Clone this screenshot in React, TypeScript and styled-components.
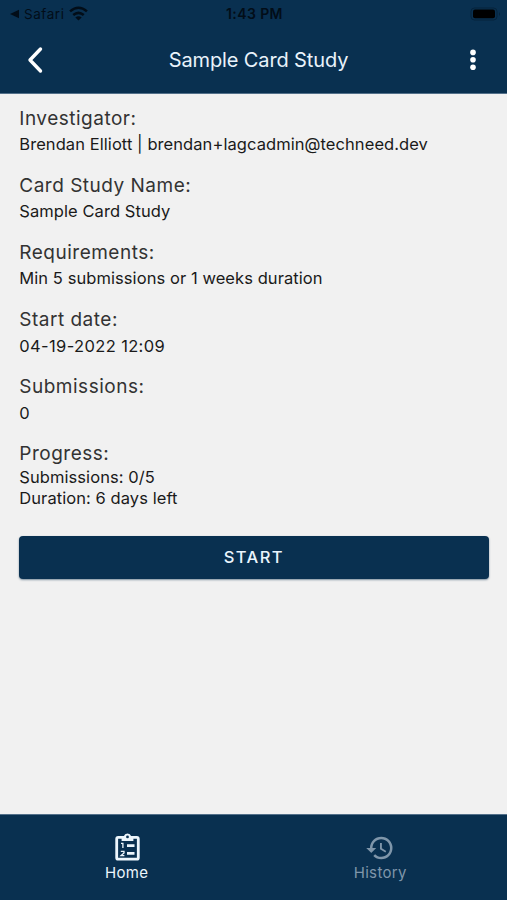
import React from "react";
import styled, { createGlobalStyle } from "styled-components";

const NAVY = "#093050";

const GlobalStyle = createGlobalStyle`
  * { box-sizing: border-box; }
  body { margin: 0; background: #f1f1f1; font-family: Inter, "Liberation Sans", sans-serif; }
`;

const Screen = styled.div`
  width: 507px;
  height: 900px;
  display: flex;
  flex-direction: column;
  overflow: hidden;
  background: #f1f1f1;
`;

const Header = styled.header`
  height: 94px;
  background: ${NAVY};
  border-bottom: 1px solid #53708a;
`;

const StatusBar = styled.div`
  height: 27px;
  display: grid;
  grid-template-columns: 1fr auto 1fr;
  align-items: center;
  padding: 0 6px 0 8px;
  color: #020d18;
  font-size: 13.5px;
`;

const BackToApp = styled.div`
  display: flex;
  align-items: center;
  letter-spacing: 0.55px;
  svg:first-child { margin-right: 5px; }
  svg:last-child { margin-left: 5px; }
`;

const Clock = styled.div`
  font-weight: 600;
  font-size: 14px;
  letter-spacing: 0.4px;
`;

const Battery = styled.svg`
  justify-self: end;
`;

const TitleBar = styled.div`
  height: 66px;
  display: grid;
  grid-template-columns: 60px 1fr 50px;
  align-items: center;
`;

const IconButton = styled.button`
  display: flex;
  justify-content: center;
  padding: 0 0 0 10px;
  border: 0;
  background: none;
`;

const MenuButton = styled(IconButton)`
  padding: 0;
  margin-right: 19px;
`;

const Title = styled.h1`
  margin: 0 0 1px;
  text-align: center;
  font-size: 20px;
  font-weight: 400;
  letter-spacing: -0.12px;
  color: #e9f3fb;
`;

const Content = styled.main`
  flex: 1;
  padding: 11.5px 18.5px 0 19.3px;
`;

const Field = styled.section`
  height: 67.2px;
`;

const Label = styled.h2`
  margin: 0;
  font-size: 19px;
  line-height: 26px;
  font-weight: 400;
  letter-spacing: 0.5px;
  color: #333;
`;

const Value = styled.p<{ $tight?: boolean; $spacing?: number }>`
  margin: 0;
  padding-top: ${(p) => (p.$tight ? 0 : 2.6)}px;
  font-size: 16.5px;
  line-height: ${(p) => (p.$tight ? 20.8 : 21)}px;
  letter-spacing: ${(p) => p.$spacing ?? 0.07}px;
  color: #1a1a1a;
`;

const Progress = styled.section`
  height: 94.5px;
`;

const StartButton = styled.button`
  display: block;
  width: 100%;
  height: 43px;
  padding: 0;
  border: 0;
  border-radius: 4px;
  background: ${NAVY};
  color: #eaf5fd;
  font: 500 16.5px Inter, sans-serif;
  letter-spacing: 1.4px;
  box-shadow: 0 1px 2px rgba(10, 48, 78, 0.5);
`;

const TabBar = styled.nav`
  height: 86px;
  display: grid;
  grid-template-columns: 1fr 1fr;
  background: ${NAVY};
  border-top: 1px solid #53708a;
`;

const Tab = styled.div<{ $active?: boolean }>`
  display: flex;
  flex-direction: column;
  align-items: center;
  padding-top: 18px;
  font-size: 15px;
  line-height: 18px;
  letter-spacing: 0.35px;
  color: ${(p) => (p.$active ? "#edf6fc" : "#7f96aa")};
  svg { margin-bottom: 1px; }
`;

const fields: { label: string; value: string; spacing?: number }[] = [
  { label: "Investigator:", value: "Brendan Elliott | brendan+lagcadmin@techneed.dev" },
  { label: "Card Study Name:", value: "Sample Card Study" },
  { label: "Requirements:", value: "Min 5 submissions or 1 weeks duration" },
  { label: "Start date:", value: "04-19-2022 12:09", spacing: 0.36 },
  { label: "Submissions:", value: "0" },
];

const ClipboardIcon = () => (
  <svg width="30" height="30" viewBox="0 0 30 30" fill="none" stroke="currentColor">
    <rect x="4.7" y="4.4" width="21.6" height="21.8" rx="1.5" strokeWidth="2.8" />
    <path d="M9.6 3.2 H11.8 A3.9 3.9 0 0 1 19.2 3.2 H21.4 V8 H9.6 Z" fill="currentColor" stroke="none" />
    <circle cx="15.5" cy="3.9" r="1.4" fill={NAVY} stroke="none" />
    <path d="M9 10.4 H10.9 V15 M8.8 18.3 H12 V19.9 L9 22.6 H12.4" strokeWidth="1.3" />
    <path d="M15 12.6 H22.5 M15 20.4 H22.5" strokeWidth="2.6" />
  </svg>
);

const HistoryIcon = () => (
  <svg width="30" height="30" viewBox="0 0 24 24" fill="currentColor">
    <path d="M13 3a9 9 0 0 0-9 9H1l3.89 3.89.07.14L9 12H6c0-3.87 3.13-7 7-7s7 3.13 7 7-3.13 7-7 7c-1.93 0-3.68-.79-4.94-2.06l-1.42 1.42A8.954 8.954 0 0 0 13 21a9 9 0 0 0 0-18zm-1 5v5l4.28 2.54.72-1.21-3.5-2.08V8H12z" />
  </svg>
);

export default function App() {
  return (
    <Screen>
      <GlobalStyle />
      <Header>
        <StatusBar>
          <BackToApp>
            <svg width="11" height="10" viewBox="0 0 11 10" fill="currentColor"><path d="M2 5 11 0.8V9.2Z" /></svg>
            Safari
            <svg width="19" height="15" viewBox="0 0 18 14" fill="none" stroke="currentColor" strokeWidth="2.4">
              <path d="M1 5Q9-2 17 5M4 8.5Q9 4.2 14 8.5" />
              <path d="M6 10.7Q9 8.3 12 10.7L9 13.7Z" fill="currentColor" stroke="none" />
            </svg>
          </BackToApp>
          <Clock>1:43 PM</Clock>
          <Battery width="31" height="14" viewBox="0 0 31 14">
            <rect x="1" y="1" width="26" height="12" rx="3.5" fill="none" stroke="#06233b" />
            <rect x="3" y="2.6" width="22" height="8.6" rx="2" fill="#000" />
            <path d="M29 5Q31 7 29 9Z" fill="#06233b" />
          </Battery>
        </StatusBar>
        <TitleBar>
          <IconButton aria-label="Back">
            <svg width="18" height="28" viewBox="0 0 18 28" fill="none" stroke="#fff" strokeWidth="3.4" strokeLinecap="round" strokeLinejoin="round">
              <path d="M14.5 3 4 14 14.5 25" />
            </svg>
          </IconButton>
          <Title>Sample Card Study</Title>
          <MenuButton aria-label="More">
            <svg width="6" height="22" viewBox="0 0 6 22" fill="#fff">
              <circle cx="3" cy="3.4" r="2.8" />
              <circle cx="3" cy="10.8" r="2.8" />
              <circle cx="3" cy="18.2" r="2.8" />
            </svg>
          </MenuButton>
        </TitleBar>
      </Header>
      <Content>
        {fields.map(({ label, value, spacing }) => (
          <Field key={label}>
            <Label>{label}</Label>
            <Value $spacing={spacing}>{value}</Value>
          </Field>
        ))}
        <Progress>
          <Label>Progress:</Label>
          <Value $tight>Submissions: 0/5</Value>
          <Value $tight>Duration: 6 days left</Value>
        </Progress>
        <StartButton>START</StartButton>
      </Content>
      <TabBar>
        <Tab $active>
          <ClipboardIcon />
          Home
        </Tab>
        <Tab>
          <HistoryIcon />
          History
        </Tab>
      </TabBar>
    </Screen>
  );
}
